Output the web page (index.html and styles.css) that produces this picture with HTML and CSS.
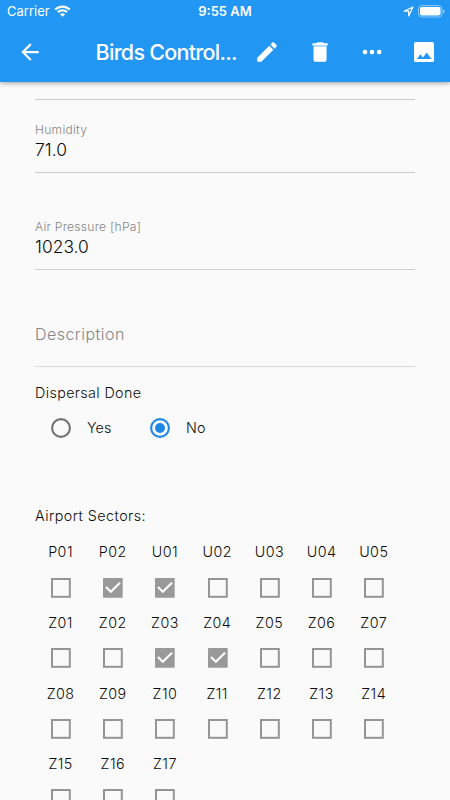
FILE: index.html
```html
<!DOCTYPE html>
<html lang="en">
<head>
<meta charset="utf-8">
<title>Birds Control</title>
<link rel="stylesheet" href="styles.css">
</head>
<body>
<svg class="defs" width="0" height="0"><defs>
<symbol id="box" viewBox="0 0 20 20"><rect x="1" y="1" width="17.800" height="17.800" fill="none" stroke="#959595" stroke-width="2"/></symbol>
<symbol id="checked" viewBox="0 0 20 20"><rect width="19.700" height="19.700" rx=".6" fill="#999"/><path d="M3 9 7.800 13.700 17 4.700" fill="none" stroke="#fff" stroke-width="2.200"/></symbol>
</defs></svg>
<header class="header">
  <div class="status">
    <div class="carrier"><span>Carrier</span>
      <svg class="wifi" viewBox="0 0 17 12"><path d="M.5 3.8C5-.7 12-.7 16.500 3.800L14.900 5.400C11.300 1.900 5.700 1.900 2.100 5.400ZM3.200 6.500C6.200 3.600 10.800 3.600 13.800 6.500L12.200 8.100C10.100 6.100 6.900 6.100 4.800 8.100ZM5.900 9.200C7.400 7.900 9.600 7.900 11.100 9.200L8.500 11.800Z" fill="#fff"/></svg>
    </div>
    <div class="time">9:55 AM</div>
    <div class="power">
      <svg class="location" viewBox="0 0 11 11"><path d="M10 1 1 5.200H5.700V10Z" fill="none" stroke="#fff" stroke-width="1.2" stroke-linejoin="round"/></svg>
      <svg class="battery" viewBox="0 0 27 13"><rect x=".6" y=".6" width="23.300" height="11.400" rx="3.300" fill="none" stroke="#fff" stroke-opacity=".5"/><rect x="2" y="2" width="20.500" height="8.600" rx="2" fill="#fff"/><path d="M25 4.200Q26.500 4.700 26.500 6.300T25 8.400Z" fill="#fff" fill-opacity=".5"/></svg>
    </div>
  </div>
  <div class="toolbar">
    <svg class="icon back" viewBox="0 0 24 24"><path d="M20 11H7.830l5.590-5.590L12 4l-8 8 8 8 1.410-1.410L7.830 13H20z"/></svg>
    <h1 class="title">Birds Control...</h1>
    <div class="actions">
      <svg class="icon" viewBox="0 0 24 24"><path d="M3 17.250V21h3.750L17.810 9.940l-3.750-3.750zM20.710 7.040c.39-.39.39-1.020 0-1.410l-2.340-2.340c-.39-.39-1.020-.39-1.410 0l-1.830 1.830 3.750 3.750z"/></svg>
      <svg class="icon" viewBox="0 0 24 24"><path d="M6 19c0 1.100.9 2 2 2h8c1.100 0 2-.9 2-2V7H6zM19 4h-3.500l-1-1h-5l-1 1H5v2h14z"/><path d="M6 6H18V7H6Z" fill-opacity=".6"/></svg>
      <svg class="icon" viewBox="0 0 24 24"><circle cx="5.500" cy="12" r="2.200"/><circle cx="12" cy="12" r="2.200"/><circle cx="18.500" cy="12" r="2.200"/></svg>
      <svg class="icon" viewBox="0 0 24 24"><path fill-rule="evenodd" d="M4.500 2.800H19.500Q21.200 2.800 21.200 4.500V19.500Q21.200 21.200 19.500 21.200H4.500Q2.800 21.200 2.800 19.500V4.500Q2.800 2.800 4.500 2.800ZM5.500 18.300H18.700L14.500 12.500 11 17 8.500 14Z"/></svg>
    </div>
  </div>
</header>
<main class="form">
  <div class="rule"></div>
  <div class="field humidity"><div class="label">Humidity</div><div class="value">71.0</div></div>
  <div class="field pressure"><div class="label">Air Pressure [hPa]</div><div class="value">1023.0</div></div>
  <div class="field description">Description</div>
  <div class="question">Dispersal Done</div>
  <div class="radios">
    <div class="option yes"><svg class="radio" viewBox="0 0 20 20"><circle cx="10" cy="10" r="8.900" fill="none" stroke="#737373" stroke-width="2.100"/></svg><span>Yes</span></div>
    <div class="option"><svg class="radio" viewBox="0 0 20 20"><circle cx="10" cy="10" r="8.900" fill="none" stroke="#1e88e5" stroke-width="2.100"/><circle cx="10" cy="10" r="5" fill="#1e88e5"/></svg><span>No</span></div>
  </div>
  <div class="sectors-title">Airport Sectors:</div>
  <div class="sectors">
    <div class="sector"><span>P01</span><svg><use href="#box"/></svg></div>
    <div class="sector"><span>P02</span><svg><use href="#checked"/></svg></div>
    <div class="sector"><span>U01</span><svg><use href="#checked"/></svg></div>
    <div class="sector"><span>U02</span><svg><use href="#box"/></svg></div>
    <div class="sector"><span>U03</span><svg><use href="#box"/></svg></div>
    <div class="sector"><span>U04</span><svg><use href="#box"/></svg></div>
    <div class="sector"><span>U05</span><svg><use href="#box"/></svg></div>
    <div class="sector"><span>Z01</span><svg><use href="#box"/></svg></div>
    <div class="sector"><span>Z02</span><svg><use href="#box"/></svg></div>
    <div class="sector"><span>Z03</span><svg><use href="#checked"/></svg></div>
    <div class="sector"><span>Z04</span><svg><use href="#checked"/></svg></div>
    <div class="sector"><span>Z05</span><svg><use href="#box"/></svg></div>
    <div class="sector"><span>Z06</span><svg><use href="#box"/></svg></div>
    <div class="sector"><span>Z07</span><svg><use href="#box"/></svg></div>
    <div class="sector"><span>Z08</span><svg><use href="#box"/></svg></div>
    <div class="sector"><span>Z09</span><svg><use href="#box"/></svg></div>
    <div class="sector"><span>Z10</span><svg><use href="#box"/></svg></div>
    <div class="sector"><span>Z11</span><svg><use href="#box"/></svg></div>
    <div class="sector"><span>Z12</span><svg><use href="#box"/></svg></div>
    <div class="sector"><span>Z13</span><svg><use href="#box"/></svg></div>
    <div class="sector"><span>Z14</span><svg><use href="#box"/></svg></div>
    <div class="sector"><span>Z15</span><svg><use href="#box"/></svg></div>
    <div class="sector"><span>Z16</span><svg><use href="#box"/></svg></div>
    <div class="sector"><span>Z17</span><svg><use href="#box"/></svg></div>
  </div>
</main>
</body>
</html>
```
FILE: styles.css
```css
* { box-sizing: border-box; }
body {
  margin: 0;
  height: 800px;
  overflow: hidden;
  background: #fafafa;
  color: #0c0c0c;
  font: 300 14.300px/20px Inter, sans-serif;
}
svg { display: block; flex: none; }
.defs { height: 0; }
.header {
  position: relative;
  height: 82px;
  background: #2196f3;
  color: #fff;
  box-shadow: 0 1px 5px rgba(0, 0, 0, .38);
}
.status {
  display: grid;
  grid-template-columns: 1fr auto 1fr;
  align-items: center;
  height: 22px;
  padding: 0 5px 0 7px;
  font-size: 13px;
  font-weight: 400;
}
.carrier, .power { display: flex; align-items: center; }
.carrier { gap: 4px; letter-spacing: 0; }
.wifi { width: 17px; height: 12px; }
.time { padding-right: 2px; font-weight: 600; letter-spacing: 0; }
.power { justify-content: flex-end; gap: 4px; }
.location { width: 11px; height: 11px; }
.battery { width: 27px; height: 13px; }
.toolbar {
  display: flex;
  align-items: center;
  height: 60px;
  padding: 0 13px 0 17px;
}
.icon { width: 26.100px; height: 26.100px; fill: #fff; }
.title {
  width: 159.200px;
  margin: 0 0 0 52.500px;
  font-size: 21.500px;
  font-weight: 500;
  line-height: 28px;
  letter-spacing: -.73px;
  white-space: nowrap;
}
.actions { display: flex; gap: 26.070px; }
.form { padding: 17px 35px 0; }
.rule { height: 1px; background: #cdcdcd; }
.field { border-bottom: 1px solid #cdcdcd; }
.humidity { height: 73px; padding-top: 21px; }
.pressure { height: 97px; padding-top: 45px; }
.label { font-size: 12.100px; line-height: 17px; color: #858585; letter-spacing: .26px; }
.value { margin-top: 1px; font-size: 17.400px; line-height: 22px; letter-spacing: .05px; }
.description {
  height: 96.500px;
  padding-top: 54px;
  border-color: #dadada;
  color: #858585;
  font-size: 16px;
  letter-spacing: .47px;
}
.question { margin-top: 16.500px; letter-spacing: .38px; }
.radios { display: flex; gap: 39px; height: 20px; margin: 15px 0 0 16px; }
.option { display: flex; gap: 16px; }
.yes { width: 60px; }
.option span { letter-spacing: .1px; }
.radio { width: 20px; height: 20px; }
.sectors-title { margin-top: 68px; letter-spacing: .47px; }
.sectors {
  display: grid;
  grid-template-columns: repeat(7, 52.200px);
  grid-auto-rows: 70.600px;
  margin-top: 16.400px;
}
.sector { display: flex; flex-direction: column; align-items: center; letter-spacing: .45px; }
.sector span { padding-right: 1px; }
.sector svg { width: 20px; height: 20px; margin-top: 15.300px; }
```
